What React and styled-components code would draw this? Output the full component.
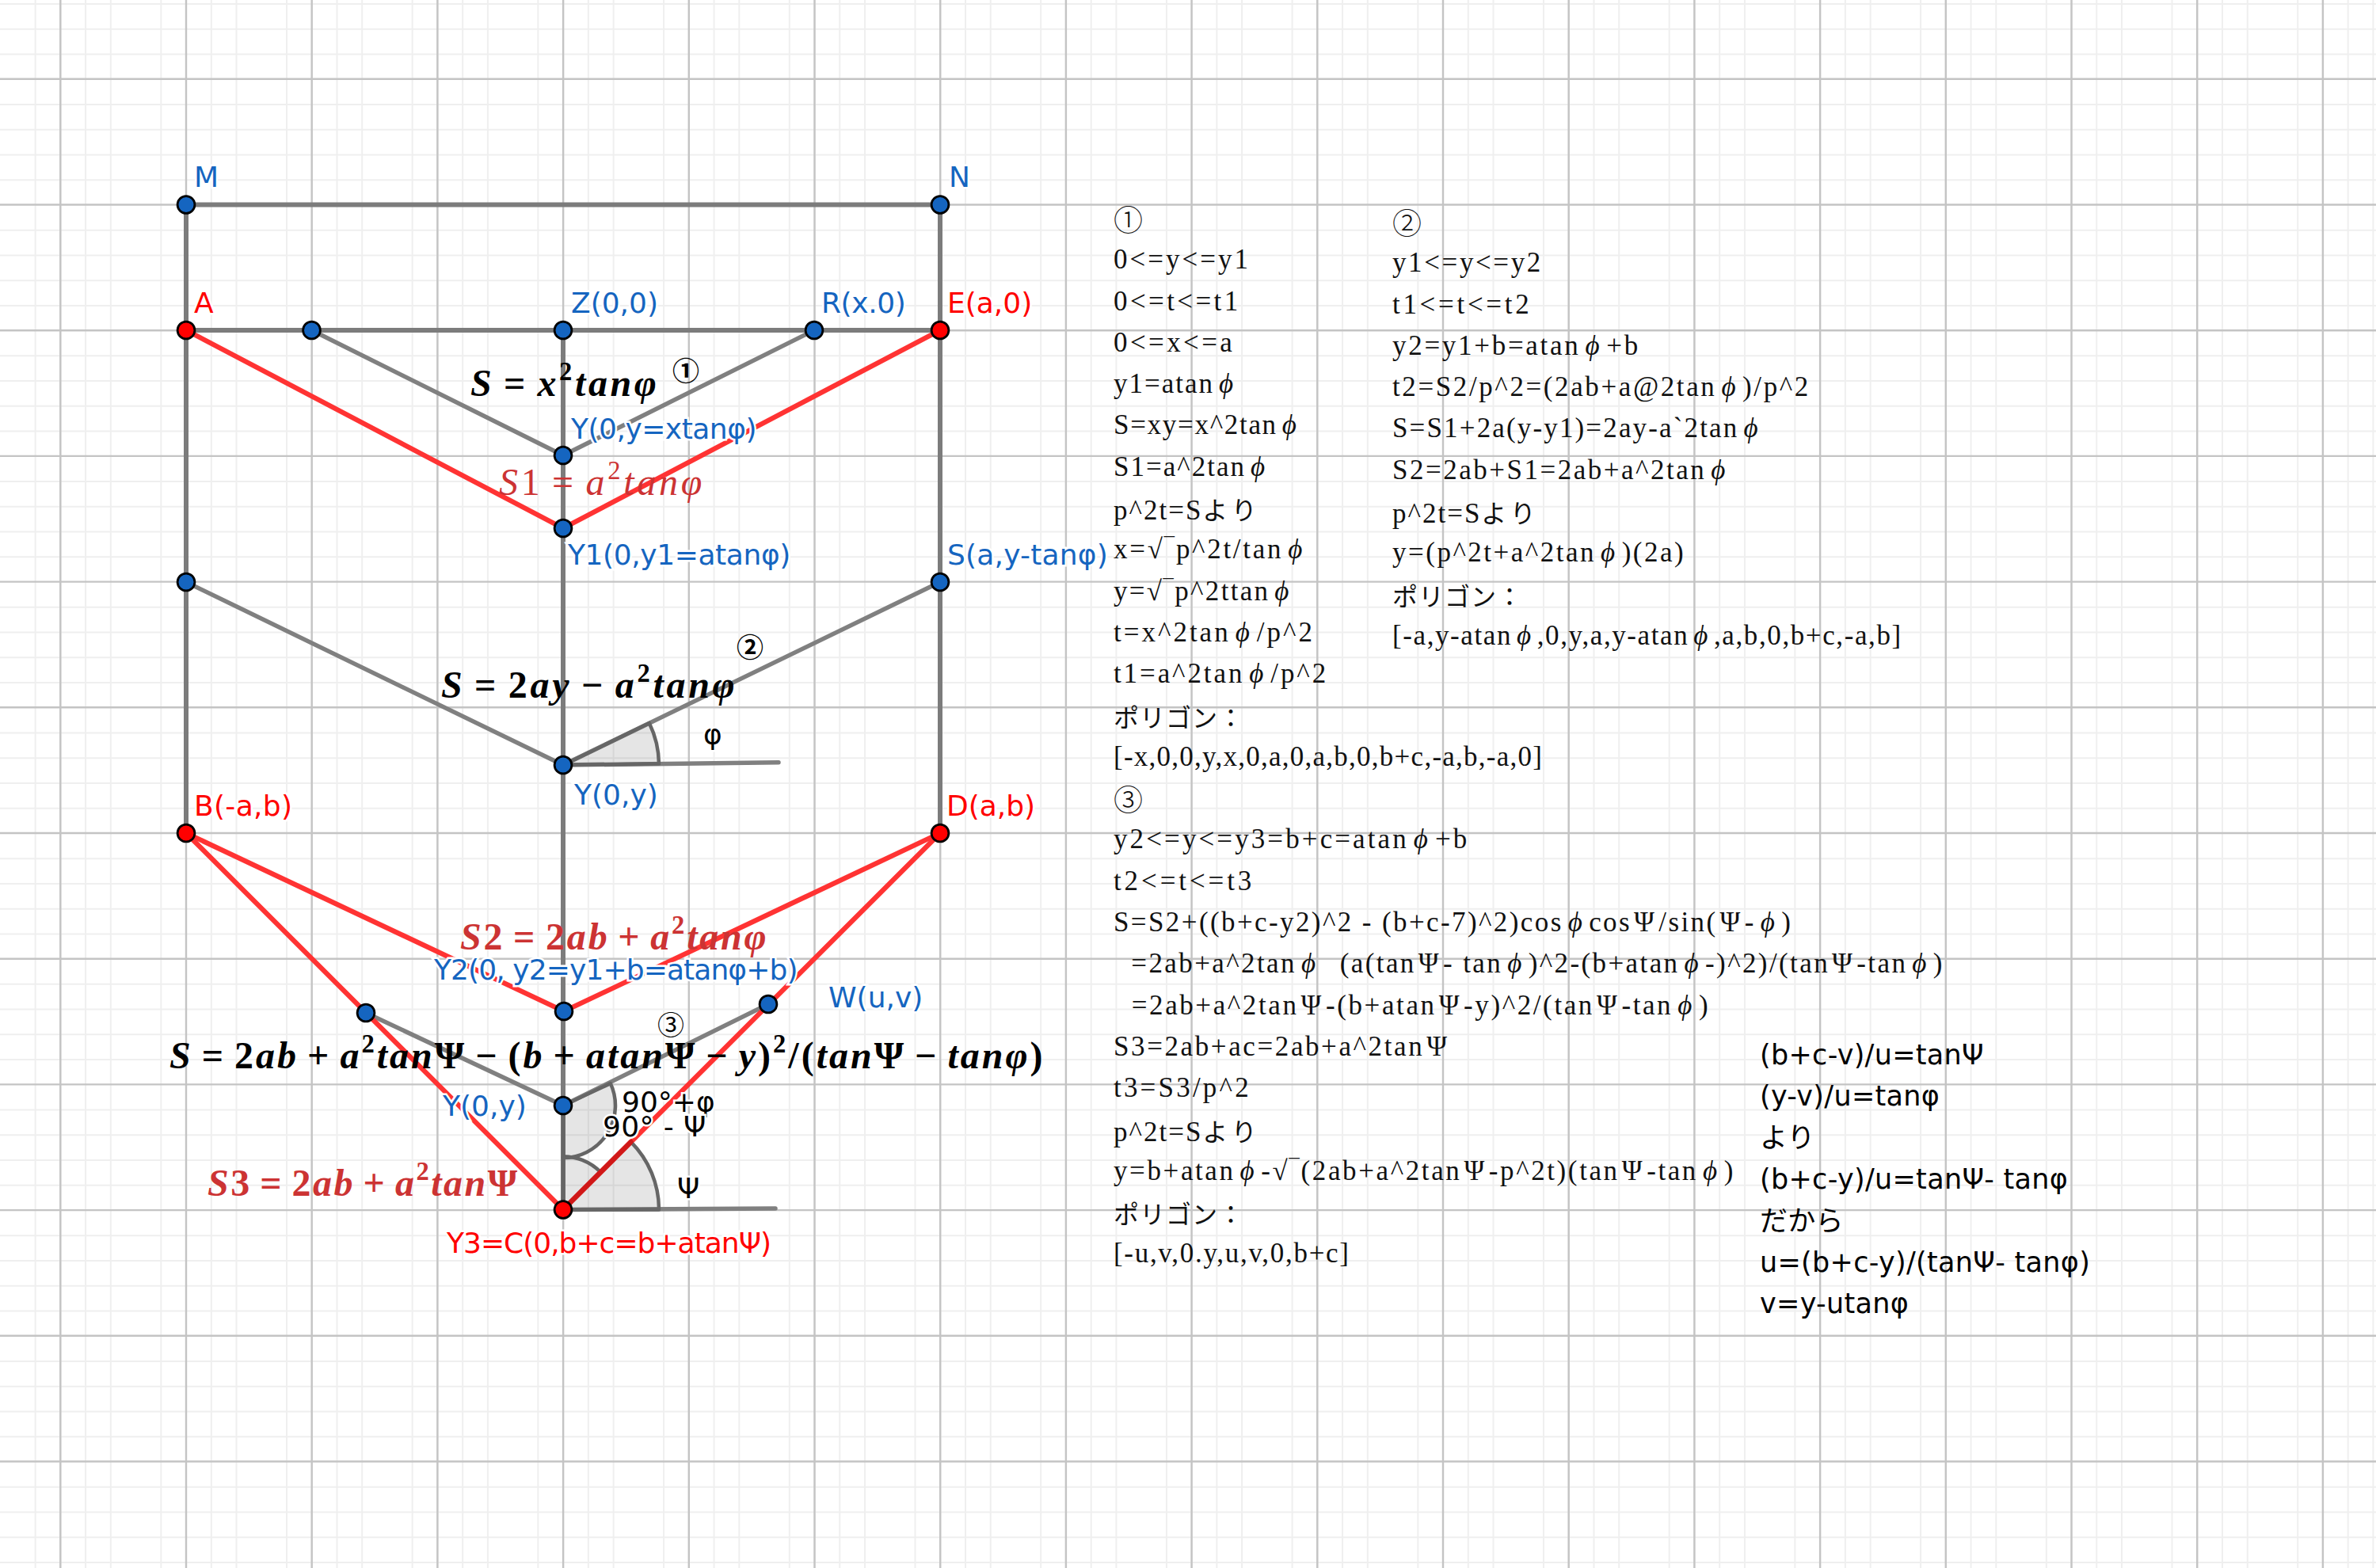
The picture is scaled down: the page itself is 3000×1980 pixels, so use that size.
import React from 'react';
import styled, { createGlobalStyle } from 'styled-components';

const Global = createGlobalStyle`
  html, body { margin: 0; padding: 0; background: #fff; }
`;

const Canvas = styled.div`
  position: relative;
  width: 3000px;
  height: 1980px;
  overflow: hidden;
  background: #fff;
`;

const Drawing = styled.svg`
  position: absolute;
  inset: 0;
  display: block;
`;

const Label = styled.span`
  position: absolute;
  left: ${p => p.$x}px;
  top: calc(${p => p.$y}px - 0.846em);
  font-family: "DejaVu Sans", sans-serif;
  font-size: 36px;
  line-height: 1;
  white-space: pre;
  letter-spacing: ${p => p.$ls || 0}px;
  color: ${p => p.$c};
  -webkit-text-stroke: 5px #fff;
  paint-order: stroke fill;
`;

const Formula = styled.span`
  position: absolute;
  left: ${p => p.$x}px;
  top: calc(${p => p.$y}px - 0.8375em);
  font-family: "Liberation Serif", serif;
  font-size: 48px;
  line-height: 1;
  white-space: pre;
  font-weight: ${p => (p.$bold ? 700 : 400)};
  letter-spacing: ${p => p.$ls || 0}px;
  word-spacing: -4px;
  color: ${p => p.$c || '#000'};
`;

const Var = styled.span`
  font-style: italic;
`;

const Sup = styled.span`
  font-size: 0.68em;
  line-height: 0;
  vertical-align: 0.62em;
`;

const Circled = styled.span`
  position: absolute;
  left: ${p => p.$x}px;
  top: ${p => p.$y}px;
  transform: translate(-50%, -50%);
  font-family: "Noto Sans CJK JP", sans-serif;
  font-size: 34px;
  line-height: 1;
  font-weight: ${p => (p.$bold ? 700 : 400)};
  color: #000;
`;

const NoteColumn = styled.div`
  position: absolute;
  left: ${p => p.$x}px;
  top: ${p => p.$y}px;
  display: flex;
  flex-direction: column;
  font-family: "Liberation Serif", "Noto Sans CJK JP", serif;
  font-size: 35px;
  line-height: 52.3px;
  color: #111;
  white-space: pre;
`;

const NoteLine = styled.div`
  height: 52.3px;
  letter-spacing: ${p => p.$ls}px;
`;

const Greek = styled.span`
  margin: 0 ${p => (p.$wide ? 6 : 3)}px;
  font-style: ${p => (p.$wide ? 'italic' : 'normal')};
`;

const Kana = styled.span`
  font-family: "Noto Sans CJK JP", sans-serif;
  font-weight: 400;
  font-size: 32px;
  letter-spacing: ${p => p.$ls}px;
`;

const Ring = styled.span`
  font-family: "Noto Sans CJK JP", sans-serif;
  font-weight: 300;
  font-size: 37px;
  letter-spacing: 0;
`;

const SansColumn = styled.div`
  position: absolute;
  left: ${p => p.$x}px;
  top: ${p => p.$y}px;
  display: flex;
  flex-direction: column;
  font-family: "DejaVu Sans", "Noto Sans CJK JP", sans-serif;
  font-size: 35px;
  line-height: 52.4px;
  letter-spacing: 0.3px;
  color: #000;
  white-space: pre;
`;

const SansLine = styled.div`
  height: 52.4px;
`;

const BLUE = '#1565c0';
const RED = '#ff0000';
const MATH_RED = '#cc3333';

const majorX = Array.from({ length: 19 }, (_, i) => 76.3 + i * 158.7);
const majorY = Array.from({ length: 12 }, (_, i) => 99.8 + i * 158.7);
const minorX = Array.from({ length: 100 }, (_, i) => 44.6 + i * 31.74).filter(
  (_, i) => (i + 1) % 5 !== 0
);
const minorY = Array.from({ length: 66 }, (_, i) => 5 + i * 31.74).filter(
  (_, i) => (i + 2) % 5 !== 0
);

function wedge(cx, cy, r, a1, a2) {
  const p = a => [cx + r * Math.cos((a * Math.PI) / 180), cy - r * Math.sin((a * Math.PI) / 180)];
  const [x1, y1] = p(a1);
  const [x2, y2] = p(a2);
  return `M${cx} ${cy}L${x1} ${y1}A${r} ${r} 0 0 0 ${x2} ${y2}Z`;
}

const grayThick = [
  [235, 258.5, 1187, 258.5],
  [235, 417, 1187, 417],
  [235, 258.5, 235, 1052],
  [1187, 258.5, 1187, 1052],
  [711, 417, 711, 1527.5],
];
const grayThin = [
  [393.5, 417, 711, 575],
  [711, 575, 1028, 417],
  [235, 735, 711, 966],
  [711, 966, 1187, 735],
  [711, 966, 983, 962.7],
  [462, 1279, 711, 1396],
  [711, 1396, 970, 1268],
  [711, 1527.5, 979, 1526],
];
const redLines = [
  [235, 417, 711, 667],
  [711, 667, 1187, 417],
  [235, 1052, 712, 1277],
  [712, 1277, 1187, 1052],
  [235, 1052, 711, 1527.5],
  [711, 1527.5, 1187, 1052],
];
const points = [
  [235, 258.5, BLUE], [1187, 258.5, BLUE], [235, 417, RED], [393.5, 417, BLUE], [711, 417, BLUE],
  [1028, 417, BLUE], [1187, 417, RED], [711, 575, BLUE], [711, 667, BLUE], [235, 735, BLUE],
  [1187, 735, BLUE], [711, 966, BLUE], [235, 1052, RED], [1187, 1052, RED], [712, 1277, BLUE],
  [462, 1279, BLUE], [970, 1268, BLUE], [711, 1396, BLUE], [711, 1527.5, RED],
];

const labels = [
  ['M', 245, 236, BLUE, 0], ['N', 1198, 236, BLUE, 0], ['A', 245, 395, RED, 0], ['Z(0,0)', 721, 395, BLUE, 0],
  ['R(x.0)', 1037, 395, BLUE, -0.4], ['E(a,0)', 1196, 395, RED, 0], ['Y(0,y=xtanφ)', 721, 554, BLUE, -0.5],
  ['Y1(0,y1=atanφ)', 717, 713, BLUE, -0.4], ['S(a,y-tanφ)', 1196, 713, BLUE, 0.2], ['Y(0,y)', 725, 1016, BLUE, 0],
  ['B(-a,b)', 245, 1030, RED, 0.3], ['D(a,b)', 1195, 1030, RED, 0], ['Y2(0, y2=y1+b=atanφ+b)', 548, 1237, BLUE, -0.9],
  ['W(u,v)', 1046, 1272, BLUE, 0], ['Y(0,y)', 559, 1409, BLUE, 0], ['φ', 888, 940, '#000', 0],
  ['90°+φ', 785, 1404, '#000', 0], ['90° - Ψ', 761, 1435, '#000', 0.4], ['Ψ', 855, 1513, '#000', 0],
  ['Y3=C(0,b+c=b+atanΨ)', 564, 1582, RED, -1],
];

function math(str) {
  return str.split(/(\^\d|[A-Za-zφ]+)/).map((part, i) => {
    if (!part) return null;
    if (part[0] === '^') return <Sup key={i}>{part.slice(1)}</Sup>;
    if (/^[A-Za-zφ]+$/.test(part)) return <Var key={i}>{part}</Var>;
    return <React.Fragment key={i}>{part}</React.Fragment>;
  });
}

const formulas = [
  { t: 'S = x^2tanφ', x: 594, y: 500, bold: true, ls: 3.6 },
  { t: 'S1 = a^2tanφ', x: 630, y: 625, c: MATH_RED, ls: 3.7 },
  { t: 'S = 2ay − a^2tanφ', x: 557, y: 881, bold: true, ls: 3.7 },
  { t: 'S2 = 2ab + a^2tanφ', x: 581, y: 1199, bold: true, c: MATH_RED, ls: 2.8 },
  { t: 'S = 2ab + a^2tanΨ − (b + atanΨ − y)^2/(tanΨ − tanφ)', x: 214, y: 1349, bold: true, ls: 3 },
  { t: 'S3 = 2ab + a^2tanΨ', x: 262, y: 1510, bold: true, c: MATH_RED, ls: 2.5 },
];

const col1 = [
  ['①', 0], ['0<=y<=y1', 3], ['0<=t<=t1', 3.4], ['0<=x<=a', 3.4], ['y1=atanϕ', 2], ['S=xy=x^2tanϕ', 1.7],
  ['S1=a^2tanϕ', 2], ['p^2t=Sより', 2], ['x=√‾p^2t/tanϕ', 2.7], ['y=√‾p^2ttanϕ', 2.3], ['t=x^2tanϕ/p^2', 3],
  ['t1=a^2tanϕ/p^2', 2.9], ['ポリゴン：', 2], ['[-x,0,0,y,x,0,a,0,a,b,0,b+c,-a,b,-a,0]', 1.25], ['③', 0],
  ['y2<=y<=y3=b+c=atanϕ+b', 3.1], ['t2<=t<=t3', 3.9],
  ['S=S2+((b+c-y2)^2 - (b+c-7)^2)cosϕcosΨ/sin(Ψ-ϕ)', 2.4],
  ['  =2ab+a^2tanϕ  (a(tanΨ- tanϕ)^2-(b+atanϕ-)^2)/(tanΨ-tanϕ)', 2.4],
  ['  =2ab+a^2tanΨ-(b+atanΨ-y)^2/(tanΨ-tanϕ)', 2.6],
  ['S3=2ab+ac=2ab+a^2tanΨ', 2.6], ['t3=S3/p^2', 3.2], ['p^2t=Sより', 2],
  ['y=b+atanϕ-√‾(2ab+a^2tanΨ-p^2t)(tanΨ-tanϕ)', 2.6], ['ポリゴン：', 2], ['[-u,v,0.y,u,v,0,b+c]', 1.7],
];
const col2 = [
  ['②', 0], ['y1<=y<=y2', 2.6], ['t1<=t<=t2', 3.7], ['y2=y1+b=atanϕ+b', 2.7], ['t2=S2/p^2=(2ab+a@2tanϕ)/p^2', 2.6],
  ['S=S1+2a(y-y1)=2ay-a`2tanϕ', 2.15], ['S2=2ab+S1=2ab+a^2tanϕ', 2.5], ['p^2t=Sより', 2], ['y=(p^2t+a^2tanϕ)(2a)', 2.5],
  ['ポリゴン：', 2], ['[-a,y-atanϕ,0,y,a,y-atanϕ,a,b,0,b+c,-a,b]', 1.6],
];
const col3 = [
  '(b+c-v)/u=tanΨ', '(y-v)/u=tanφ', 'より', '(b+c-y)/u=tanΨ- tanφ', 'だから',
  'u=(b+c-y)/(tanΨ- tanφ)', 'v=y-utanφ',
];

function note(str) {
  return str.split(/([ϕΨ]|より|ポリゴン：|[①②③])/).map((part, i) => {
    if (part === 'ϕ') return <Greek key={i} $wide>{part}</Greek>;
    if (part === 'Ψ') return <Greek key={i}>{part}</Greek>;
    if (part === 'より') return <Kana key={i} $ls={5}>{part}</Kana>;
    if (part === 'ポリゴン：') return <Kana key={i} $ls={1}>{part}</Kana>;
    if (/[①②③]/.test(part)) return <Ring key={i}>{part}</Ring>;
    return part;
  });
}

const Line = ({ d, color, w }) => (
  <line x1={d[0]} y1={d[1]} x2={d[2]} y2={d[3]} stroke={color} strokeWidth={w} strokeLinecap="round" />
);

const Wedge = ({ d }) => (
  <path d={d} fill="#000" fillOpacity="0.1" stroke="#666" strokeWidth="4.5" strokeLinejoin="round" />
);

export default function App() {
  return (
    <Canvas>
      <Global />
      <Drawing width="3000" height="1980" viewBox="0 0 3000 1980">
        {minorX.map((x, i) => <line key={i} x1={x} y1="0" x2={x} y2="1980" stroke="#efefef" strokeWidth="2" />)}
        {minorY.map((y, i) => <line key={i} x1="0" y1={y} x2="3000" y2={y} stroke="#efefef" strokeWidth="2" />)}
        {majorX.map((x, i) => <line key={i} x1={x} y1="0" x2={x} y2="1980" stroke="#c4c4c4" strokeWidth="2.4" />)}
        {majorY.map((y, i) => <line key={i} x1="0" y1={y} x2="3000" y2={y} stroke="#c4c4c4" strokeWidth="2.4" />)}
        {grayThick.map((d, i) => <Line key={i} d={d} color="#7c7c7c" w={6} />)}
        {grayThin.map((d, i) => <Line key={i} d={d} color="#808080" w={5.5} />)}
        {redLines.map((d, i) => <Line key={i} d={d} color="#ff3333" w={6.2} />)}
        <Wedge d={wedge(711, 966, 121, 0.7, 26)} />
        <Wedge d={wedge(711, 1527.5, 121, 0, 45)} />
        <Wedge d={wedge(711, 1527.5, 67, 45, 90)} />
        <Wedge d={wedge(711, 1396, 66, -90, 25)} />
        <Line d={[711, 1527.5, 796.5, 1442]} color="#d01818" w={6.2} />
        {points.map(([x, y, c], i) => (
          <circle key={i} cx={x} cy={y} r="10.9" fill={c} stroke="#000" strokeWidth="2.8" />
        ))}
      </Drawing>
      {labels.map(([t, x, y, c, ls], i) => <Label key={i} $x={x} $y={y} $c={c} $ls={ls}>{t}</Label>)}
      {formulas.map((f, i) => (
        <Formula key={i} $x={f.x} $y={f.y} $bold={f.bold} $c={f.c} $ls={f.ls}>{math(f.t)}</Formula>
      ))}
      <Circled $x={866} $y={467} $bold>①</Circled>
      <Circled $x={947} $y={816} $bold>②</Circled>
      <Circled $x={847} $y={1293}>③</Circled>
      <NoteColumn $x={1406} $y={250}>
        {col1.map(([t, ls], i) => <NoteLine key={i} $ls={ls}>{note(t)}</NoteLine>)}
      </NoteColumn>
      <NoteColumn $x={1758} $y={254}>
        {col2.map(([t, ls], i) => <NoteLine key={i} $ls={ls}>{note(t)}</NoteLine>)}
      </NoteColumn>
      <SansColumn $x={2222} $y={1306}>
        {col3.map((t, i) => <SansLine key={i}>{t}</SansLine>)}
      </SansColumn>
    </Canvas>
  );
}
